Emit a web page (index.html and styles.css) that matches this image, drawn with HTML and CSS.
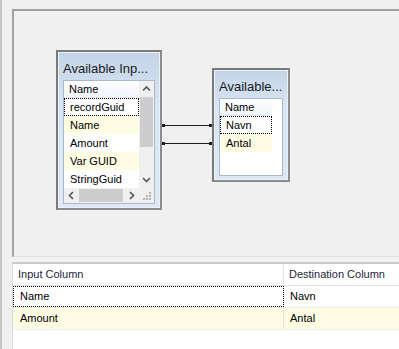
FILE: index.html
```html
<!DOCTYPE html>
<html lang="en">
<head>
    <meta charset="UTF-8">
    <title>Column Mapping</title>
    <link rel="stylesheet" href="styles.css">
</head>
<body>
    <div class="window">
        <div class="canvas">
            <div class="node node-input">
                <div class="node-title">Available Inp...</div>
                <div class="node-list scrolled">
                    <div class="rows">
                        <div class="row head">Name</div>
                        <div class="row focus">recordGuid</div>
                        <div class="row alt">Name</div>
                        <div class="row">Amount</div>
                        <div class="row alt">Var GUID</div>
                        <div class="row">StringGuid</div>
                    </div>
                    <div class="vscroll">
                        <svg class="arrow" width="15" height="16" viewBox="0 0 15 16"><polyline points="4,9.5 7.5,6 11,9.5" fill="none" stroke="#5a5a5a" stroke-width="1.7"/></svg>
                        <div class="vthumb"></div>
                        <div class="vtrack"></div>
                        <svg class="arrow" width="15" height="18" viewBox="0 0 15 18"><polyline points="4,8 7.5,11.5 11,8" fill="none" stroke="#5a5a5a" stroke-width="1.7"/></svg>
                    </div>
                    <div class="hscroll">
                        <svg class="arrow" width="15" height="15" viewBox="0 0 15 15"><polyline points="9,4 5.5,7.5 9,11" fill="none" stroke="#5a5a5a" stroke-width="1.7"/></svg>
                        <div class="hthumb"></div>
                        <div class="htrack"></div>
                        <svg class="arrow" width="14" height="15" viewBox="0 0 14 15"><polyline points="5,4 8.5,7.5 5,11" fill="none" stroke="#5a5a5a" stroke-width="1.7"/></svg>
                    </div>
                    <div class="grip">
                        <svg width="15" height="15" viewBox="0 0 15 15" fill="#b5b5b5">
                            <rect x="10" y="4" width="2" height="2"/>
                            <rect x="7" y="7" width="2" height="2"/>
                            <rect x="10" y="7" width="2" height="2"/>
                            <rect x="4" y="10" width="2" height="2"/>
                            <rect x="7" y="10" width="2" height="2"/>
                            <rect x="10" y="10" width="2" height="2"/>
                        </svg>
                    </div>
                </div>
            </div>

            <div class="link link-name"></div>
            <div class="link link-amount"></div>

            <div class="node node-dest">
                <div class="node-title">Available...</div>
                <div class="node-list">
                    <div class="rows">
                        <div class="row head">Name</div>
                        <div class="row focus">Navn</div>
                        <div class="row alt">Antal</div>
                    </div>
                </div>
            </div>
        </div>

        <div class="grid">
            <div class="grid-row grid-head">
                <div class="cell">Input Column</div>
                <div class="cell">Destination Column</div>
            </div>
            <div class="grid-row">
                <div class="cell focus-cell">Name</div>
                <div class="cell">Navn</div>
            </div>
            <div class="grid-row alt">
                <div class="cell">Amount</div>
                <div class="cell">Antal</div>
            </div>
        </div>
    </div>
</body>
</html>
```

FILE: styles.css
```css
body {
    margin: 0;
    background: #f0f0f0;
    font-family: "Liberation Sans", Arial, sans-serif;
    font-size: 11px;
    color: #000;
}

.window {
    height: 349px;
    box-sizing: border-box;
    border-left: 2px solid #c6c6c6;
    padding: 9px 0 0 10px;
    display: flex;
    flex-direction: column;
    overflow: hidden;
}

/* diagram area */
.canvas {
    position: relative;
    height: 248px;
    flex-shrink: 0;
    box-sizing: border-box;
    border-top: 2px solid #a0a0a0;
    border-left: 2px solid #a0a0a0;
    border-bottom: 1px solid #dedede;
}

.node {
    position: absolute;
    box-sizing: border-box;
    border: 2px solid #8c8c8c;
    border-top-color: #7a7a7a;
    border-left-color: #7a7a7a;
    box-shadow: inset 0 0 0 1px #eaf1f9;
    background: linear-gradient(#c3d4e8, #d9e5f2 35%, #dde8f4);
    padding: 9px 5px 4px 5px;
    display: flex;
    flex-direction: column;
}

.node-input {
    left: 42px;
    top: 39px;
    width: 106px;
    height: 160px;
}

.node-dest {
    left: 198px;
    top: 57px;
    width: 78px;
    height: 114px;
}

.node-title {
    font-size: 13px;
    line-height: 16px;
    margin-bottom: 3px;
    color: #1b1b1b;
    white-space: nowrap;
}

.node-list {
    flex: 1;
    border: 1px solid #aab8c7;
    background: #fff;
    min-height: 0;
}

.node-list.scrolled {
    display: grid;
    grid-template-columns: 1fr 15px;
    grid-template-rows: 1fr 15px;
}

.node-dest .rows {
    width: 52px;
}

.row {
    height: 18px;
    line-height: 18px;
    box-sizing: border-box;
    padding-left: 6px;
    white-space: nowrap;
    overflow: hidden;
}

.row.head {
    height: 17px;
    line-height: 16px;
    padding-left: 5px;
    background: linear-gradient(#fdfeff, #f1f5fa);
    border-bottom: 1px solid #e3e8ee;
}

.row.focus {
    border: 1px dotted #000;
    line-height: 16px;
    padding-left: 5px;
}

.row.alt {
    background: #fefce3;
}

/* scrollbars */
.vscroll {
    display: flex;
    flex-direction: column;
    background: #f0f0f0;
}

.vthumb {
    height: 50px;
    margin: 0 1px;
    background: #cdcdcd;
}

.vtrack {
    flex: 1;
}

.hscroll {
    display: flex;
    background: #f0f0f0;
}

.hthumb {
    width: 44px;
    margin: 1px 0;
    background: #cdcdcd;
}

.htrack {
    flex: 1;
}

.arrow {
    display: block;
    flex-shrink: 0;
}

.grip {
    background: #f0f0f0;
}

.grip svg {
    display: block;
}

/* connectors */
.link {
    position: absolute;
    left: 148px;
    width: 50px;
    height: 1px;
    background: #1e1e1e;
}

.link::before,
.link::after {
    content: "";
    position: absolute;
    top: -1px;
    width: 3px;
    height: 3px;
    background: #1e1e1e;
}

.link::before {
    left: 0;
}

.link::after {
    right: 0;
}

.link-name {
    top: 114px;
}

.link-amount {
    top: 132px;
}

/* mapping grid */
.grid {
    flex: 1;
    margin-top: 5px;
    background: #fff;
    border-top: 2px solid #c9c9c9;
    border-left: 1px solid #d9d9d9;
}

.grid-row {
    display: grid;
    grid-template-columns: 271px 1fr;
    height: 22px;
    box-sizing: border-box;
    border-bottom: 1px solid #eeeeee;
}

.grid-row.alt {
    background: #fefce3;
}

.cell {
    line-height: 21px;
    padding-left: 7px;
    white-space: nowrap;
}

.cell:first-child {
    border-right: 1px solid #e4e4e4;
}

.cell:last-child {
    padding-left: 6px;
}

.grid-head .cell {
    padding-left: 5px;
    color: #1e1e3a;
}

.grid-head {
    border-bottom: 1px solid #e2e2e2;
}

.focus-cell {
    border: 1px dotted #000;
    line-height: 19px;
    padding-left: 6px;
}

.cell.focus-cell:first-child {
    border-right: 1px dotted #000;
}
```
